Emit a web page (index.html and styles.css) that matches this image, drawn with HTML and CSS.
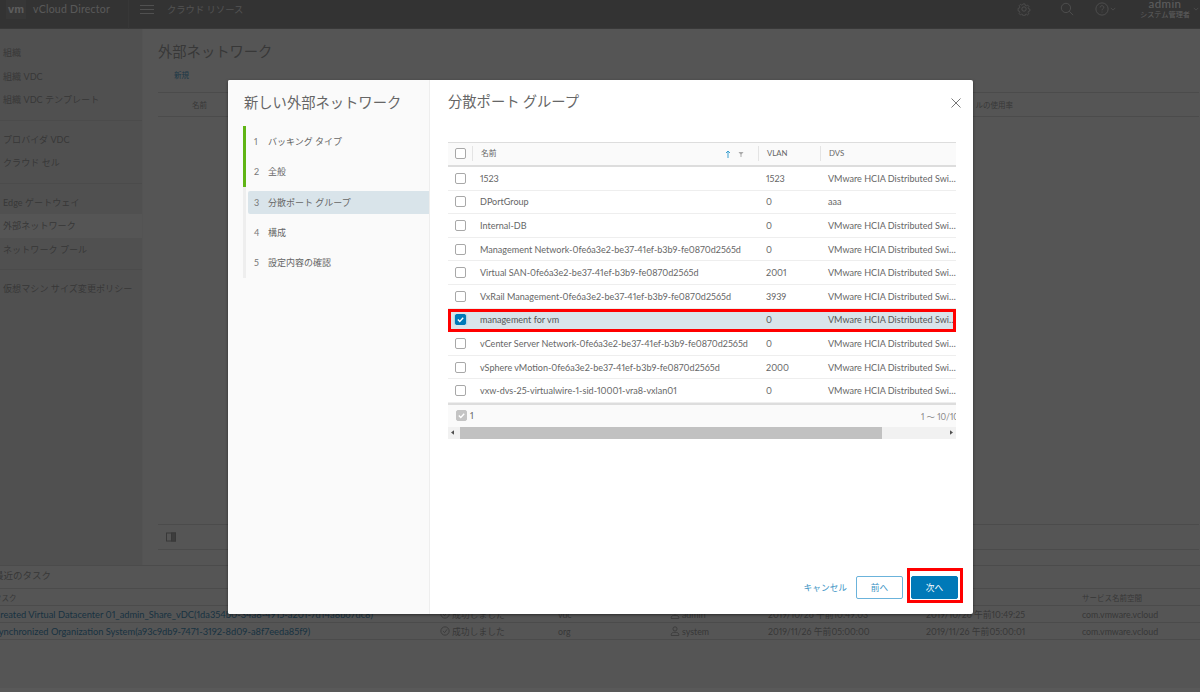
FILE: index.html
```html
<!DOCTYPE html>
<html lang="ja">
<head>
<meta charset="utf-8">
<title>vCloud Director</title>
<link rel="stylesheet" href="styles.css">
</head>
<body>
<div class="app">
  <header class="topbar">
    <div class="brand"><span class="logo">vm</span><span class="product">vCloud Director</span></div>
    <div class="burger"><i></i><i></i><i></i></div>
    <span class="crumb">クラウド リソース</span>
    <div class="top-right">
      <svg class="ti gear" viewBox="0 0 16 16"><circle cx="8" cy="8" r="2.5"/><path d="M6.8 1.5h2.4l.4 1.9 1.3.6 1.7-1 1.6 1.7-1 1.6.5 1.4 1.8.4v2.4l-1.8.4-.5 1.3 1 1.7-1.7 1.6-1.6-1-1.4.5-.4 1.8H6.8l-.4-1.8-1.3-.5-1.7 1-1.6-1.7 1-1.6-.5-1.3-1.8-.4V7.2l1.8-.4.5-1.4-1-1.6 1.7-1.7 1.6 1 1.3-.6z" transform="translate(.8 .8) scale(.9)"/></svg>
      <svg class="ti search" viewBox="0 0 16 16"><circle cx="6.8" cy="6.8" r="5.3"/><path d="M10.6 10.6 15 15"/></svg>
      <svg class="ti help" viewBox="0 0 16 16"><circle cx="8" cy="8" r="7"/><path d="M5.9 6.2c0-1.3 1-2 2.1-2s2.1.8 2.1 1.9c0 1.700-2.100 1.700-2.100 3.400M8 11v1"/></svg>
      <svg class="chev" viewBox="0 0 8 5"><path d="M1 1l3 3 3-3"/></svg>
      <div class="user"><span class="uname">admin</span><span class="urole">システム管理者</span></div>
      <svg class="chev last" viewBox="0 0 8 5"><path d="M1 1l3 3 3-3"/></svg>
    </div>
  </header>

  <div class="workspace">
    <nav class="sidenav">
      <a>組織</a><a>組織 VDC</a><a>組織 VDC テンプレート</a>
      <hr>
      <a>プロバイダ VDC</a><a>クラウド セル</a>
      <hr>
      <a>Edge ゲートウェイ</a><a class="cur">外部ネットワーク</a><a>ネットワーク プール</a>
      <hr>
      <a>仮想マシン サイズ変更ポリシー</a>
    </nav>
    <main class="content">
      <h1>外部ネットワーク</h1>
      <div class="action">新規</div>
      <div class="bg-head"><span>名前</span><span>ルの使用率</span></div>
      <div class="bg-body"></div>
      <div class="bg-foot"><svg viewBox="0 0 10 10"><rect x=".5" y="1" width="9" height="8"/><rect x="5.500" y="1" width="4" height="8" class="fill"/></svg></div>
    </main>
  </div>

  <section class="tasks">
    <h2>最近のタスク</h2>
    <div class="trow thead"><span>タスク</span><span></span><span></span><span></span><span></span><span></span><span>サービス名前空間</span></div>
    <div class="trow">
      <span class="tlink">Created Virtual Datacenter 01_admin_Share_vDC(1da354b0-34a8-4915-a201-7d14a8b67dc8)</span>
      <span class="ok"><svg viewBox="0 0 12 12"><circle cx="6" cy="6" r="5"/><path d="M3.500 6l2 2 3-4"/></svg>成功しました</span>
      <span>vdc</span>
      <span class="who"><svg viewBox="0 0 12 12"><circle cx="6" cy="3.500" r="2.500"/><path d="M1.500 11.500V10c0-1.500 2-2.500 4.500-2.500s4.500 1 4.500 2.500v1.500z"/></svg>admin</span>
      <span>2019/10/26 午前10:49:03</span><span>2019/10/26 午前10:49:25</span><span>com.vmware.vcloud</span>
    </div>
    <div class="trow">
      <span class="tlink">Synchronized Organization System(a93c9db9-7471-3192-8d09-a8f7eeda85f9)</span>
      <span class="ok"><svg viewBox="0 0 12 12"><circle cx="6" cy="6" r="5"/><path d="M3.500 6l2 2 3-4"/></svg>成功しました</span>
      <span>org</span>
      <span class="who"><svg viewBox="0 0 12 12"><circle cx="6" cy="3.500" r="2.500"/><path d="M1.500 11.500V10c0-1.500 2-2.500 4.500-2.500s4.500 1 4.500 2.500v1.500z"/></svg>system</span>
      <span>2019/11/26 午前05:00:00</span><span>2019/11/26 午前05:00:01</span><span>com.vmware.vcloud</span>
    </div>
  </section>
</div>

<div class="backdrop"></div>

<div class="modal">
  <aside class="wizard">
    <div class="wz-title">新しい外部ネットワーク</div>
    <ol class="steps">
      <li class="done"><b>1</b>バッキング タイプ</li>
      <li class="done"><b>2</b>全般</li>
      <li class="active"><b>3</b>分散ポート グループ</li>
      <li><b>4</b>構成</li>
      <li><b>5</b>設定内容の確認</li>
    </ol>
  </aside>
  <section class="pane">
    <div class="pane-head">
      <h3>分散ポート グループ</h3>
      <svg class="close" viewBox="0 0 10 10"><path d="M.5.5l9 9M9.500.5l-9 9"/></svg>
    </div>
    <div class="grid">
      <div class="row head">
        <span class="cell-c"><i class="cb"></i></span>
        <span class="name">名前<em class="sort"><svg viewBox="0 0 6 8"><path class="up" d="M3 8V1M1 3l2-2 2 2"/></svg><svg viewBox="0 0 6 8"><path class="flt" d="M.5 2h5L3.500 4.500V7h-1V4.500z"/></svg></em></span>
        <span>VLAN</span>
        <span>DVS</span>
      </div>
      <div class="rows">
        <div class="row"><span class="cell-c"><i class="cb"></i></span><span class="name">1523</span><span>1523</span><span class="dvs">VMware HCIA Distributed Switch</span></div>
        <div class="row"><span class="cell-c"><i class="cb"></i></span><span class="name">DPortGroup</span><span>0</span><span class="dvs">aaa</span></div>
        <div class="row"><span class="cell-c"><i class="cb"></i></span><span class="name">Internal-DB</span><span>0</span><span class="dvs">VMware HCIA Distributed Switch</span></div>
        <div class="row"><span class="cell-c"><i class="cb"></i></span><span class="name">Management Network-0fe6a3e2-be37-41ef-b3b9-fe0870d2565d</span><span>0</span><span class="dvs">VMware HCIA Distributed Switch</span></div>
        <div class="row"><span class="cell-c"><i class="cb"></i></span><span class="name">Virtual SAN-0fe6a3e2-be37-41ef-b3b9-fe0870d2565d</span><span>2001</span><span class="dvs">VMware HCIA Distributed Switch</span></div>
        <div class="row"><span class="cell-c"><i class="cb"></i></span><span class="name">VxRail Management-0fe6a3e2-be37-41ef-b3b9-fe0870d2565d</span><span>3939</span><span class="dvs">VMware HCIA Distributed Switch</span></div>
        <div class="row sel"><span class="cell-c"><i class="cb on"><svg viewBox="0 0 10 10"><path d="M2 5l2.200 2.200L8 3"/></svg></i></span><span class="name">management for vm</span><span>0</span><span class="dvs">VMware HCIA Distributed Switch</span></div>
        <div class="row"><span class="cell-c"><i class="cb"></i></span><span class="name">vCenter Server Network-0fe6a3e2-be37-41ef-b3b9-fe0870d2565d</span><span>0</span><span class="dvs">VMware HCIA Distributed Switch</span></div>
        <div class="row"><span class="cell-c"><i class="cb"></i></span><span class="name">vSphere vMotion-0fe6a3e2-be37-41ef-b3b9-fe0870d2565d</span><span>2000</span><span class="dvs">VMware HCIA Distributed Switch</span></div>
        <div class="row"><span class="cell-c"><i class="cb"></i></span><span class="name">vxw-dvs-25-virtualwire-1-sid-10001-vra8-vxlan01</span><span>0</span><span class="dvs">VMware HCIA Distributed Switch</span></div>
      </div>
      <div class="grid-foot">
        <span class="count"><i class="cb grey"><svg viewBox="0 0 10 10"><path d="M2 5l2.200 2.200L8 3"/></svg></i>1</span>
        <span class="range">1 ～ 10/10 個</span>
      </div>
      <div class="hscroll">
        <svg viewBox="0 0 4 6"><path d="M4 0v6L0 3z"/></svg>
        <div class="track"><div class="thumb"></div></div>
        <svg viewBox="0 0 4 6"><path d="M0 0v6l4-3z"/></svg>
      </div>
    </div>
    <div class="pane-foot">
      <a class="cancel">キャンセル</a>
      <button class="btn">前へ</button>
      <button class="btn primary">次へ</button>
    </div>
  </section>
</div>

<div class="mark mark-row"></div>
<div class="mark mark-btn"></div>
</body>
</html>
```

FILE: styles.css
```css
* { box-sizing: border-box; }
html, body { margin: 0; height: 100%; }
body {
  width: 1200px; height: 692px; overflow: hidden; position: relative;
  background: #d5d5d5;
  font-family: "Lato", "Noto Sans CJK JP", sans-serif;
  font-variant-numeric: proportional-nums;
  font-size: 9.050px; color: #666;
}

/* background application */
.app { width: 1200px; height: 692px; display: flex; flex-direction: column; overflow: hidden; color: #8c8c8c; border-bottom: 4px solid #dedede; }
.topbar { height: 29px; flex: none; background: #808080; display: flex; align-items: center; color: #fff; border-bottom: 1px solid #909090; padding-bottom: 10px; }
.brand { display: flex; align-items: center; width: 129px; height: 29px; margin-bottom: -10px; padding-bottom: 10px; border-right: 1px solid #8a8a8a; }
.logo { width: 20px; height: 19px; margin: 0 7px 0 6px; background: #8a8a8a; text-align: center; font: 700 11px/19px "Liberation Sans", sans-serif; color: #e8e8e8; }
.product { font-size: 10.500px; letter-spacing: .25px; color: #ddd; white-space: nowrap; }
.burger { width: 14px; margin: 0 13px 0 11px; display: flex; flex-direction: column; gap: 3px; }
.burger i { height: 1px; background: #c8c8c8; display: block; }
.crumb { font-size: 9.300px; color: #ccc; white-space: nowrap; }
.top-right { margin-left: auto; display: flex; align-items: center; }
.ti { fill: none; stroke: #c8c8c8; stroke-width: 1; width: 14px; height: 14px; }
.gear { margin-right: 29px; }
.search { margin-right: 21px; }
.chev { width: 6px; height: 4px; fill: none; stroke: #c8c8c8; margin-left: 1px; }
.chev.last { margin: 0 1px 0 3px; }
.user { width: 50px; margin-left: 24px; display: flex; flex-direction: column; align-items: center; line-height: 11px; white-space: nowrap; }
.uname { font-size: 11.500px; color: #e8e8e8; letter-spacing: .4px; }
.urole { font-size: 7.200px; color: #e8e8e8; }

.workspace { flex: 1; display: flex; min-height: 0; }
.sidenav { width: 143px; flex: none; padding-top: 12px; background: #c9c9c9; border-right: 1px solid #cfcfcf; display: flex; flex-direction: column; }
.sidenav a { height: 23.500px; line-height: 23.500px; padding-left: 3px; font-size: 9.100px; white-space: nowrap; }
.sidenav a.cur { background: #d5d5d5; }
.sidenav hr { border: 0; border-top: 1px solid #bbb; margin: 8px 0 7px; width: 100%; }
.content { flex: 1; padding: 13px 0 15px 15px; display: flex; flex-direction: column; }
.content h1 { margin: 0; font-size: 14.300px; font-weight: 400; line-height: 20px; }
.action { margin: 9px 0 0 16px; font-size: 7.500px; line-height: 10px; color: #4a8cb0; }
.bg-head { margin: 11px 1px 0 0; height: 25px; border: solid #bbb; border-width: 1px 0; display: flex; justify-content: space-between; align-items: center; padding: 0 186px 0 34px; font-size: 7.500px; font-weight: 400; }
.bg-body { flex: 1; }
.bg-foot { height: 26px; border: solid #bbb; border-width: 1px 0; display: flex; align-items: center; padding-left: 8px; margin-right: 1px; }
.bg-foot svg { width: 10px; height: 10px; fill: none; stroke: #8c8c8c; }
.bg-foot .fill { fill: #9a9a9a; }

.tasks { height: 123px; flex: none; margin-left: -6px; border-top: 1px solid #bbb; }
.tasks h2 { margin: 0; height: 22px; line-height: 20px; font-size: 9.500px; font-weight: 400; }
.trow { height: 17px; display: grid; grid-template-columns: 446px 118px 112px 98px 158px 156px 1fr; align-items: center; border-bottom: 1px solid #bbb; font-size: 8.800px; white-space: nowrap; }
.thead { height: 18px; border-top: 1px solid #bbb; font-size: 7.500px; }
.tlink { color: #3f7ea3; overflow: hidden; font-size: 9.300px; }
.ok, .who { display: flex; align-items: center; gap: 2px; }
.tasks svg { width: 10px; height: 10px; fill: none; stroke: #8c8c8c; }

.backdrop { position: absolute; inset: 0; background: rgba(0, 0, 0, .6); }

/* wizard */
.modal { position: absolute; left: 228px; top: 80px; width: 745px; height: 534px; display: flex; background: #fff; box-shadow: 0 1px 3px rgba(0,0,0,.5); border-radius: 2px; overflow: hidden; }
.wizard { width: 202px; flex: none; background: #fafafa; border-right: 1px solid #eee; padding: 12px 0 0 15px; }
.wz-title { margin-left: 1px; font-family: "Noto Sans CJK JP", sans-serif; font-size: 14.300px; line-height: 20px; white-space: nowrap; color: #666; }
.steps { list-style: none; margin: 14px 0 0; padding: 0; border-left: 3px solid #eee; height: 152px; position: relative; }
.steps li { height: 30.400px; display: flex; align-items: center; padding-left: 8px; white-space: nowrap; font-size: 9px; color: #666; margin-left: -3px; border-left: 3px solid transparent; }
.steps li.done { border-left-color: #60b515; }
.steps li b { font-weight: 400; width: 14px; color: #777; font-size: 9px; }
.steps li.active { background: #d9e4ea; height: 23.500px; margin: 4px 0 3px 2px; padding-left: 6px; border: 0; border-radius: 2px 0 0 2px; }

.pane { flex: 1; min-width: 0; padding: 0 0 0 18px; display: flex; flex-direction: column; }
.pane-head { height: 62px; flex: none; padding-top: 11px; display: flex; justify-content: space-between; align-items: flex-start; }
.pane-head h3 { margin: 0; font-family: "Noto Sans CJK JP", sans-serif; font-size: 14.300px; font-weight: 400; line-height: 20px; color: #666; }
.close { width: 10px; height: 10px; margin: 7px 12px 0 0; fill: none; stroke: #777; stroke-width: 1; }

.grid { width: 508px; overflow: hidden; flex: none; }
.row { display: grid; grid-template-columns: 24px 286px 62px 136px; align-items: center; height: 23.600px; white-space: nowrap; border-bottom: 1px solid #eee; }
.row > span { padding-left: 8px; overflow: hidden; }
.row > .cell-c { padding: 0 0 0 7px; display: flex; }
.head { height: 25px; background: #fafafa; border: solid #ddd; border-width: 1px 0 2px; font-size: 7.800px; padding-bottom: 1px; }
.head > span + span { border-left: 1px solid #e4e4e4; height: 15px; line-height: 15px; }
.name { display: flex; justify-content: space-between; }
.sort { display: flex; gap: 7px; margin-right: 14px; }
.sort svg { width: 6px; height: 8px; margin-top: 4px; fill: none; }
.sort .up { stroke: #3b9fd0; }
.sort .flt { fill: #aaa; }
.dvs { text-overflow: ellipsis; }
.sel { background: #d9e4ea; color: #555; }
.cb { width: 11px; height: 11px; display: block; border: 1px solid #a8a8a8; border-radius: 2px; background: #fff; flex: none; }
.cb svg { width: 9px; height: 9px; display: block; fill: none; stroke: #fff; stroke-width: 1.500; }
.cb.on { background: #0079b8; border-color: #0079b8; box-shadow: 0 0 2px #49afd9; }
.cb.grey { background: #c4c4c4; border-color: #c4c4c4; }
.grid-foot { height: 24px; background: #fafafa; border-top: 2px solid #ddd; display: flex; justify-content: space-between; align-items: center; padding-left: 8px; white-space: nowrap; }
.count { display: flex; align-items: center; gap: 3px; }
.range { font-size: 8.500px; width: 35px; overflow: hidden; color: #888; }
.hscroll { height: 12px; background: #f1f1f1; display: flex; align-items: center; justify-content: space-between; padding: 0 3px; }
.hscroll svg { width: 3px; height: 5px; fill: #505050; flex: none; }
.track { flex: 1; height: 100%; margin: 0 6px; }
.thumb { width: 422px; height: 100%; background: #c1c1c1; }

.pane-foot { margin-top: auto; height: 38px; flex: none; display: flex; align-items: flex-start; justify-content: flex-end; gap: 8px; padding-right: 15px; }
.cancel { font-size: 8.700px; line-height: 23px; color: #3b93c4; margin-right: 1px; white-space: nowrap; }
.btn { width: 47px; height: 23px; padding: 0; border: 1px solid #6bb3db; border-radius: 2px; background: #fff; color: #3b93c4; font: 400 8.700px "Noto Sans CJK JP", sans-serif; }
.primary { background: #0079b8; border-color: #0079b8; color: #fff; }

/* review annotations drawn over the screenshot */
.mark { position: absolute; border: 3px solid #f00; }
.mark-row { left: 448px; top: 309px; width: 508px; height: 23px; }
.mark-btn { left: 907px; top: 568px; width: 56px; height: 35px; }
```
